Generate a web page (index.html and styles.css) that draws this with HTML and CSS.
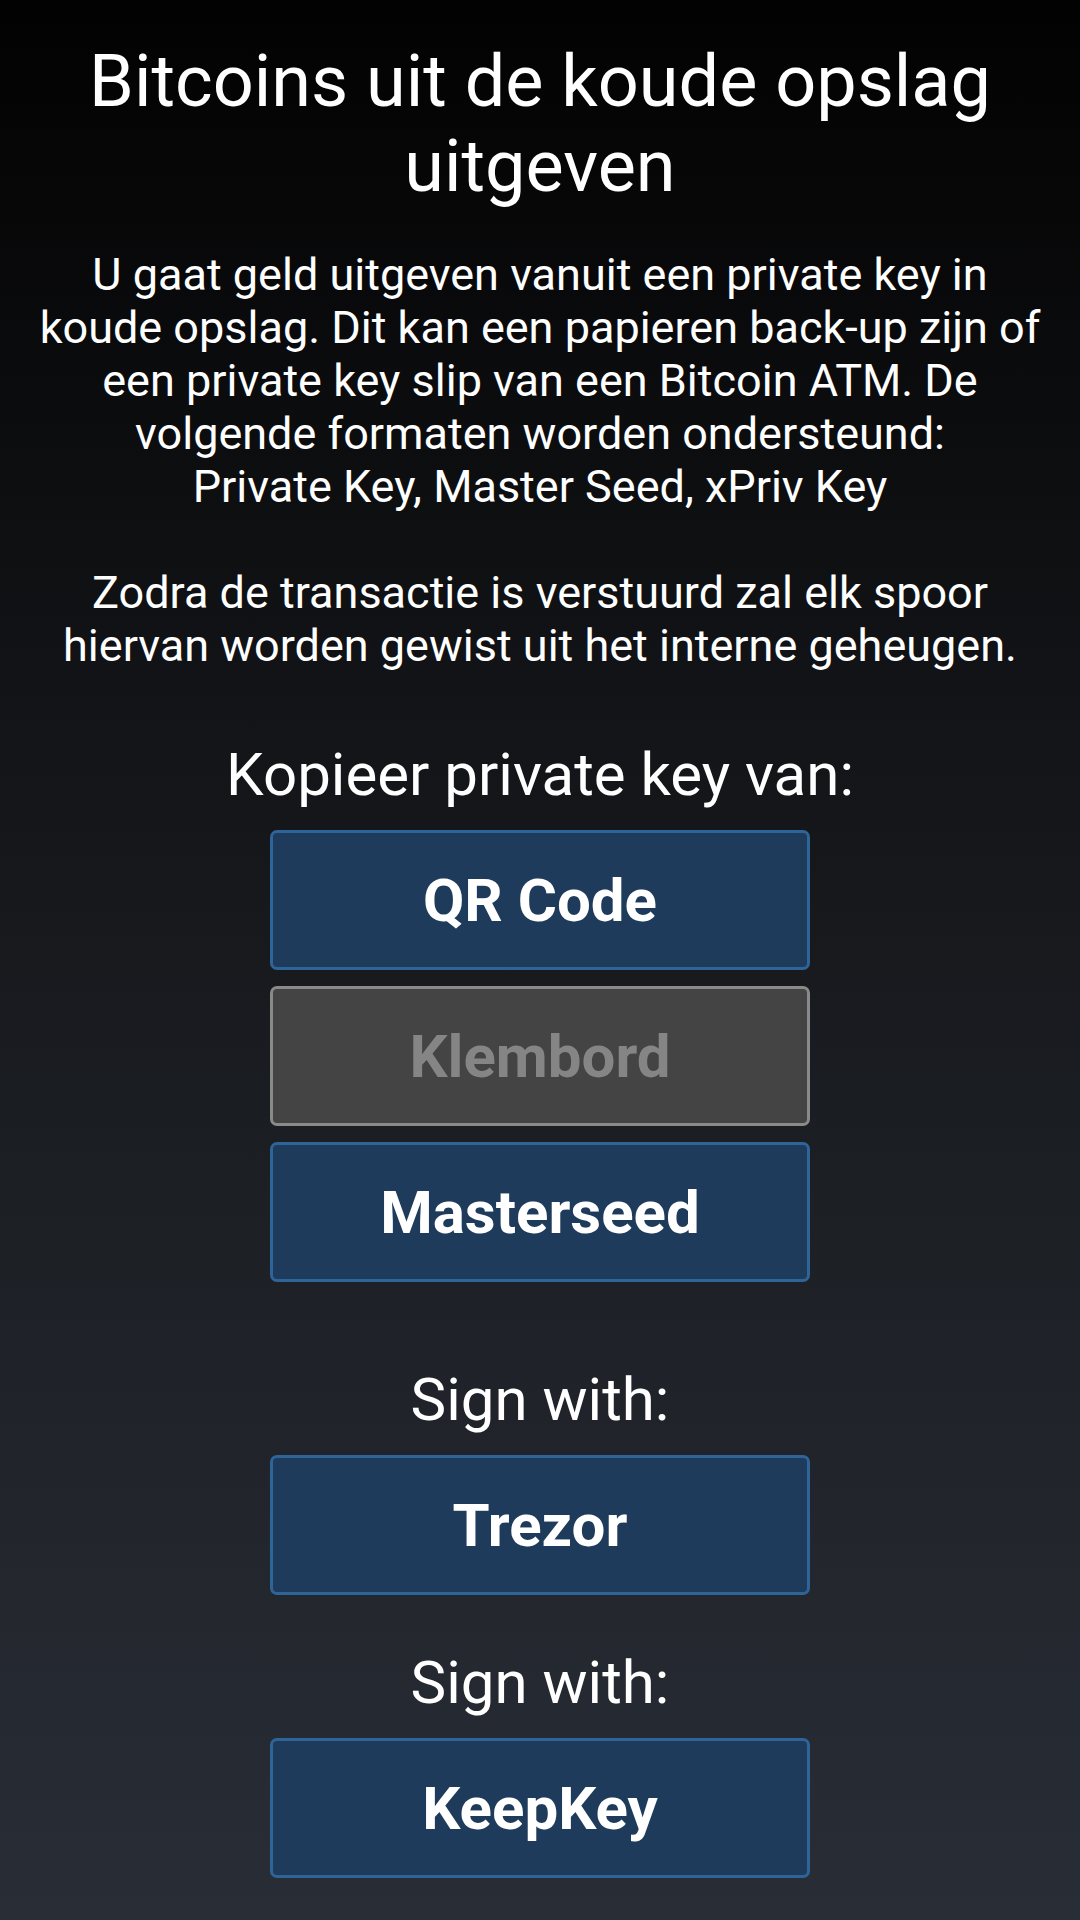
FILE: index.html
```html
<!DOCTYPE html>
<html lang="nl">
<head>
<meta charset="utf-8">
<title>Bitcoins uit de koude opslag uitgeven</title>
<link rel="stylesheet" href="styles.css">
</head>
<body>
<main class="screen">
  <h1 class="title">Bitcoins uit de koude opslag uitgeven</h1>
  <p class="intro">U gaat geld uitgeven vanuit een private key in koude opslag. Dit kan een papieren back-up zijn of een private key slip van een Bitcoin ATM. De volgende formaten worden ondersteund:<br>Private Key, Master Seed, xPriv Key<br><br>Zodra de transactie is verstuurd zal elk spoor hiervan worden gewist uit het interne geheugen.</p>

  <section class="group group-copy">
    <h2 class="label">Kopieer private key van:</h2>
    <div class="buttons">
      <button class="btn">QR Code</button>
      <button class="btn btn-disabled" disabled>Klembord</button>
      <button class="btn">Masterseed</button>
    </div>
  </section>

  <section class="group group-sign">
    <h2 class="label">Sign with:</h2>
    <div class="buttons">
      <button class="btn">Trezor</button>
    </div>
  </section>

  <section class="group group-sign2">
    <h2 class="label">Sign with:</h2>
    <div class="buttons">
      <button class="btn">KeepKey</button>
    </div>
  </section>
</main>
</body>
</html>
```

FILE: styles.css
```css
html, body {
  margin: 0;
  padding: 0;
}

body {
  width: 1080px;
  min-height: 1920px;
  background: linear-gradient(to bottom, #020202 0%, #121316 35%, #1c1f24 62%, #292d36 100%);
  color: #ffffff;
  font-family: Roboto, "Noto Sans", "Liberation Sans", sans-serif;
}

.screen {
  display: flex;
  flex-direction: column;
  align-items: center;
  padding: 39px 35px 0;
  box-sizing: border-box;
}

.title {
  margin: 0;
  font-size: 72px;
  line-height: normal;
  font-weight: 400;
  text-align: center;
}

.intro {
  margin: 39px 0 0;
  font-size: 45px;
  line-height: normal;
  font-weight: 400;
  text-align: center;
}

.group {
  display: flex;
  flex-direction: column;
  align-items: center;
}

.group-copy {
  margin-top: 67px;
}

.group-sign {
  margin-top: 82px;
}

.group-sign2 {
  margin-top: 52px;
}

.label {
  margin: 0;
  font-size: 60px;
  line-height: normal;
  font-weight: 400;
}

.buttons {
  margin-top: 20px;
  display: flex;
  flex-direction: column;
  gap: 16px;
}

.btn {
  width: 540px;
  height: 140px;
  box-sizing: border-box;
  background: #1e3b5b;
  border: 3px solid #2f6499;
  border-radius: 7px;
  color: #ffffff;
  font-family: Roboto, "Noto Sans", "Liberation Sans", sans-serif;
  font-size: 60px;
  font-weight: 700;
  padding: 0;
  display: flex;
  align-items: center;
  justify-content: center;
}

.btn-disabled {
  background: #444444;
  border-color: #8a8a8a;
  color: #858585;
}
```
